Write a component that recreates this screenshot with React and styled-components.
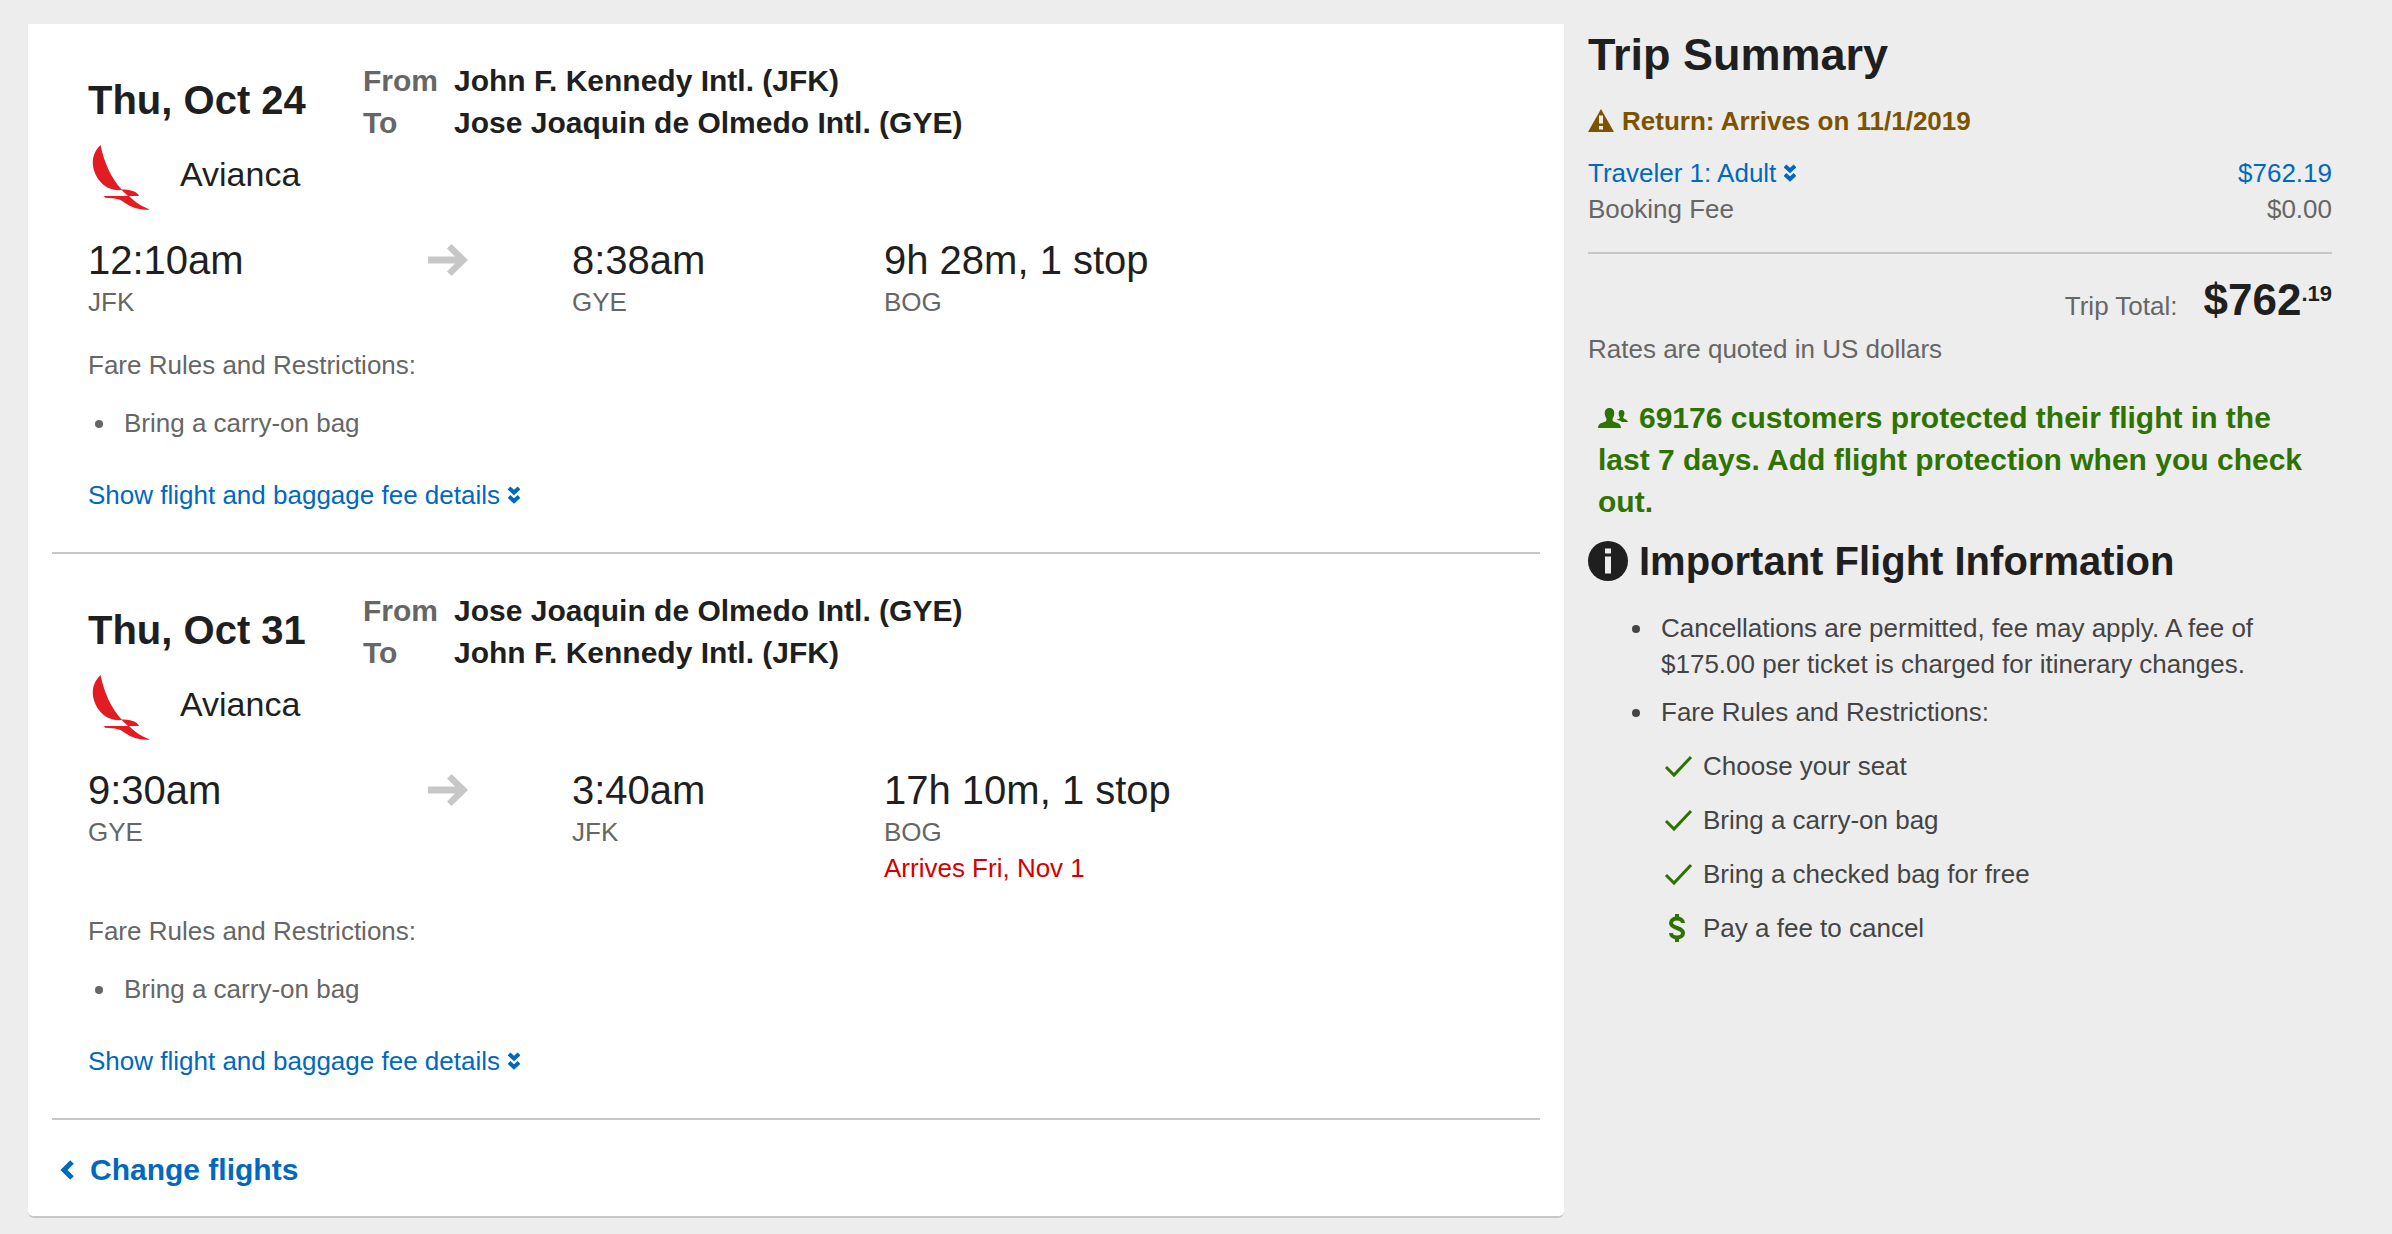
import React from "react";
import styled, { createGlobalStyle } from "styled-components";

const GlobalStyle = createGlobalStyle`
  * {
    box-sizing: border-box;
  }

  body {
    margin: 0;
    background: #ededed;
    color: #1f1f1f;
    font-family: "Liberation Sans", Arial, sans-serif;
    font-size: 26px;
    line-height: 36px;
  }
`;

const Page = styled.div`
  display: grid;
  grid-template-columns: 64fr 31fr;
  gap: 24px;
  align-items: start;
  padding: 24px 60px 16px 28px;
`;

const Card = styled.main`
  background: #fff;
  padding: 0 24px;
  border-bottom: 2px solid #c7c7c7;
  border-radius: 0 0 6px 6px;
`;

// One direction of the trip
const Leg = styled.section`
  padding: 36px 36px 39px;
  border-bottom: 2px solid #c7c7c7;
`;

const LegHeader = styled.div`
  display: grid;
  grid-template-columns: 275px 1fr;
`;

const LegDate = styled.h2`
  margin: 16px 0 0;
  font-size: 40px;
  line-height: 48px;
`;

const Route = styled.dl`
  display: grid;
  grid-template-columns: 91px 1fr;
  margin: 0;
  font-size: 30px;
  line-height: 42px;
  font-weight: bold;

  dt {
    color: #666;
  }

  dd {
    margin: 0;
  }
`;

const Airline = styled.div`
  display: flex;
  align-items: center;
  gap: 28px;
  height: 72px;
  margin: -6px 0 26px;
  font-size: 34px;
  line-height: 48px;
`;

const Times = styled.div`
  display: grid;
  grid-template-columns: 85fr 36fr 78fr 155fr;
`;

const ArrowCell = styled.div`
  padding-top: 8px;
`;

const Time = styled.div`
  font-size: 40px;
  line-height: 48px;
`;

const Note = styled.div`
  color: ${({ $alert }) => ($alert ? "#d60000" : "#666")};
`;

const FareRules = styled.div`
  margin: 27px 0 36px;
  color: #666;
`;

const BulletList = styled.ul`
  margin: 22px 0 0;
  padding-left: 30px;

  li {
    padding-left: 6px;
  }
`;

const LinkButton = styled.button`
  display: flex;
  align-items: center;
  gap: 8px;
  padding: 0;
  border: 0;
  background: none;
  color: #0068bf;
  font: inherit;
  cursor: pointer;
`;

const BackLink = styled.a`
  display: inline-flex;
  align-items: center;
  gap: 16px;
  margin: 29px 0 25px 8px;
  color: #0068bf;
  font-size: 30px;
  line-height: 42px;
  font-weight: bold;
  text-decoration: none;
`;

const Sidebar = styled.aside`
  padding-top: 3px;
`;

const Title = styled.h1`
  margin: 0 0 20px;
  font-size: 45px;
  line-height: 56px;
`;

const Warning = styled.div`
  display: flex;
  align-items: center;
  gap: 8px;
  margin-bottom: 16px;
  color: #7d5300;
  font-weight: bold;
`;

const PriceRow = styled.div`
  display: flex;
  justify-content: space-between;
  color: ${({ $link }) => ($link ? "#0068bf" : "#666")};
`;

const Total = styled.div`
  display: flex;
  justify-content: flex-end;
  align-items: baseline;
  gap: 26px;
  margin-top: 25px;
  padding-top: 18px;
  border-top: 2px solid #c7c7c7;
  color: #666;
`;

const Price = styled.strong`
  color: #1f1f1f;
  font-size: 44px;
  line-height: 56px;

  sup {
    font-size: 22px;
    line-height: 0;
    vertical-align: 14px;
  }
`;

const Rates = styled.div`
  margin-top: 3px;
  color: #666;
`;

const Protection = styled.p`
  margin: 30px 10px 13px;
  color: #2e7300;
  font-size: 30px;
  line-height: 42px;
  font-weight: bold;

  svg {
    margin-right: 11px;
  }
`;

const InfoTitle = styled.h2`
  display: flex;
  align-items: center;
  gap: 11px;
  margin: 0 0 24px;
  font-size: 40px;
  line-height: 50px;
`;

const InfoList = styled.ul`
  margin: 0;
  padding-left: 67px;
  color: #444;

  > li {
    padding-left: 6px;
  }

  > li + li {
    margin-top: 12px;
  }
`;

const Perks = styled.ul`
  display: grid;
  gap: 18px;
  margin: 18px 0 0;
  padding: 0;
  list-style: none;
`;

const Perk = styled.li`
  display: flex;
  align-items: center;
  gap: 8px;

  svg {
    width: 34px;
    color: #2e7300;
  }
`;

const AviancaLogo = () => (
  <svg width="64" height="72" viewBox="0 -4 64 72" aria-hidden="true">
    <g fill="#e31b23">
      <path d="M12.500 3C16 20 23 36 34 48C24 49 16 45 11 38C3 27 2 13 12.500 3Z" />
      <path d="M33 47.500C42 47.500 49 49 51 54L40 54Z" />
      <path d="M16 54L41 54C48 61 55 65 62 67.500C53 68.500 45 66.500 37 61C31 56.500 28 56.500 17 55.800Z" />
    </g>
  </svg>
);

const ArrowRight = () => (
  <svg width="40" height="32" viewBox="0 0 40 32" fill="#c7c7c7" aria-hidden="true">
    <path d="M0 12.500H27L19 4.500L23.500 0L40 16L23.500 32L19 27.500L27 19.500H0Z" />
  </svg>
);

const DoubleChevron = () => (
  <svg width="12" height="18" viewBox="0 0 12 18" fill="none" stroke="currentColor" strokeWidth="4" aria-hidden="true">
    <path d="M1 2L6 6.500L11 2M1 10.500L6 15L11 10.500" />
  </svg>
);

const ChevronLeft = () => (
  <svg width="14" height="20" viewBox="0 0 14 20" fill="none" stroke="currentColor" strokeWidth="5" aria-hidden="true">
    <path d="M12 2L4 10L12 18" />
  </svg>
);

const WarningIcon = () => (
  <svg width="26" height="24" viewBox="0 0 26 24" aria-hidden="true">
    <path d="M13 0L26 23H0Z" fill="currentColor" />
    <path d="M11 6.500H15V14.500H11ZM11 17H15V20.500H11Z" fill="#ededed" />
  </svg>
);

const PeopleIcon = () => (
  <svg width="30" height="20" viewBox="0 0 30 20" fill="currentColor" aria-hidden="true">
    <path d="M11.500 0C15 0 16.500 2.500 16.200 6C16 8.500 14.800 9.500 14.500 11C14.300 13 15 13.500 18 14.500C21.500 15.500 23 17 23 20H0C0 17 1.500 15.500 5 14.500C8 13.500 8.700 13 8.500 11C8.200 9.500 7 8.500 6.800 6C6.500 2.500 8 0 11.500 0Z" />
    <path d="M23.500 2C26 2 26.700 4 26.300 6.500C26 8 25.200 8.700 25.200 9.800C25.200 11 29.500 11.500 30 14H24C22 12.500 20 12 18.500 11.500C20 11 22 11 21.800 9.500C21.500 8.500 20.800 8 20.700 6.500C20.500 4 21 2 23.500 2Z" />
  </svg>
);

const InfoIcon = () => (
  <svg width="40" height="40" viewBox="0 0 40 40" aria-hidden="true">
    <circle cx="20" cy="20" r="20" fill="currentColor" />
    <path d="M17 7.500H23V12.500H17ZM17 15.500H23V32.500H17Z" fill="#ededed" />
  </svg>
);

const CheckIcon = () => (
  <svg height="24" viewBox="0 0 34 24" fill="none" stroke="currentColor" strokeWidth="3" aria-hidden="true">
    <path d="M5 13L13 21L30 3" />
  </svg>
);

const DollarIcon = () => (
  <svg height="28" viewBox="0 0 34 28" fill="none" stroke="currentColor" strokeWidth="4" aria-hidden="true">
    <path d="M22 9C22 3 10 3 10 9C10 15 22 13 22 19C22 25 10 25 10 19" />
    <path d="M16 0V5M16 23V28" />
  </svg>
);

const legs = [
  {
    date: "Thu, Oct 24",
    from: "John F. Kennedy Intl. (JFK)",
    to: "Jose Joaquin de Olmedo Intl. (GYE)",
    depart: "12:10am",
    departCode: "JFK",
    arrive: "8:38am",
    arriveCode: "GYE",
    duration: "9h 28m, 1 stop",
  },
  {
    date: "Thu, Oct 31",
    from: "Jose Joaquin de Olmedo Intl. (GYE)",
    to: "John F. Kennedy Intl. (JFK)",
    depart: "9:30am",
    departCode: "GYE",
    arrive: "3:40am",
    arriveCode: "JFK",
    duration: "17h 10m, 1 stop",
    alert: "Arrives Fri, Nov 1",
  },
];

const perks = [
  { text: "Choose your seat", Icon: CheckIcon },
  { text: "Bring a carry-on bag", Icon: CheckIcon },
  { text: "Bring a checked bag for free", Icon: CheckIcon },
  { text: "Pay a fee to cancel", Icon: DollarIcon },
];

const FlightLeg = ({ leg }) => (
  <Leg>
    <LegHeader>
      <LegDate>{leg.date}</LegDate>
      <Route>
        <dt>From</dt>
        <dd>{leg.from}</dd>
        <dt>To</dt>
        <dd>{leg.to}</dd>
      </Route>
    </LegHeader>
    <Airline>
      <AviancaLogo />
      Avianca
    </Airline>
    <Times>
      <div>
        <Time>{leg.depart}</Time>
        <Note>{leg.departCode}</Note>
      </div>
      <ArrowCell>
        <ArrowRight />
      </ArrowCell>
      <div>
        <Time>{leg.arrive}</Time>
        <Note>{leg.arriveCode}</Note>
      </div>
      <div>
        <Time>{leg.duration}</Time>
        <Note>BOG</Note>
        {leg.alert && <Note $alert>{leg.alert}</Note>}
      </div>
    </Times>
    <FareRules>
      Fare Rules and Restrictions:
      <BulletList>
        <li>Bring a carry-on bag</li>
      </BulletList>
    </FareRules>
    <LinkButton type="button">
      Show flight and baggage fee details
      <DoubleChevron />
    </LinkButton>
  </Leg>
);

const App = () => (
  <>
    <GlobalStyle />
    <Page>
      <Card>
        {legs.map((leg) => (
          <FlightLeg key={leg.date} leg={leg} />
        ))}
        <BackLink href="#flights">
          <ChevronLeft />
          Change flights
        </BackLink>
      </Card>

      <Sidebar>
        <Title>Trip Summary</Title>
        <Warning>
          <WarningIcon />
          Return: Arrives on 11/1/2019
        </Warning>
        <PriceRow $link>
          <LinkButton type="button">
            Traveler 1: Adult
            <DoubleChevron />
          </LinkButton>
          <span>$762.19</span>
        </PriceRow>
        <PriceRow>
          <span>Booking Fee</span>
          <span>$0.00</span>
        </PriceRow>
        <Total>
          <span>Trip Total:</span>
          <Price>
            $762<sup>.19</sup>
          </Price>
        </Total>
        <Rates>Rates are quoted in US dollars</Rates>
        <Protection>
          <PeopleIcon />
          69176 customers protected their flight in the last 7 days. Add flight protection when you check out.
        </Protection>
        <InfoTitle>
          <InfoIcon />
          Important Flight Information
        </InfoTitle>
        <InfoList>
          <li>
            Cancellations are permitted, fee may apply. A fee of $175.00 per ticket is charged for itinerary changes.
          </li>
          <li>
            Fare Rules and Restrictions:
            <Perks>
              {perks.map(({ text, Icon }) => (
                <Perk key={text}>
                  <Icon />
                  {text}
                </Perk>
              ))}
            </Perks>
          </li>
        </InfoList>
      </Sidebar>
    </Page>
  </>
);

export default App;
